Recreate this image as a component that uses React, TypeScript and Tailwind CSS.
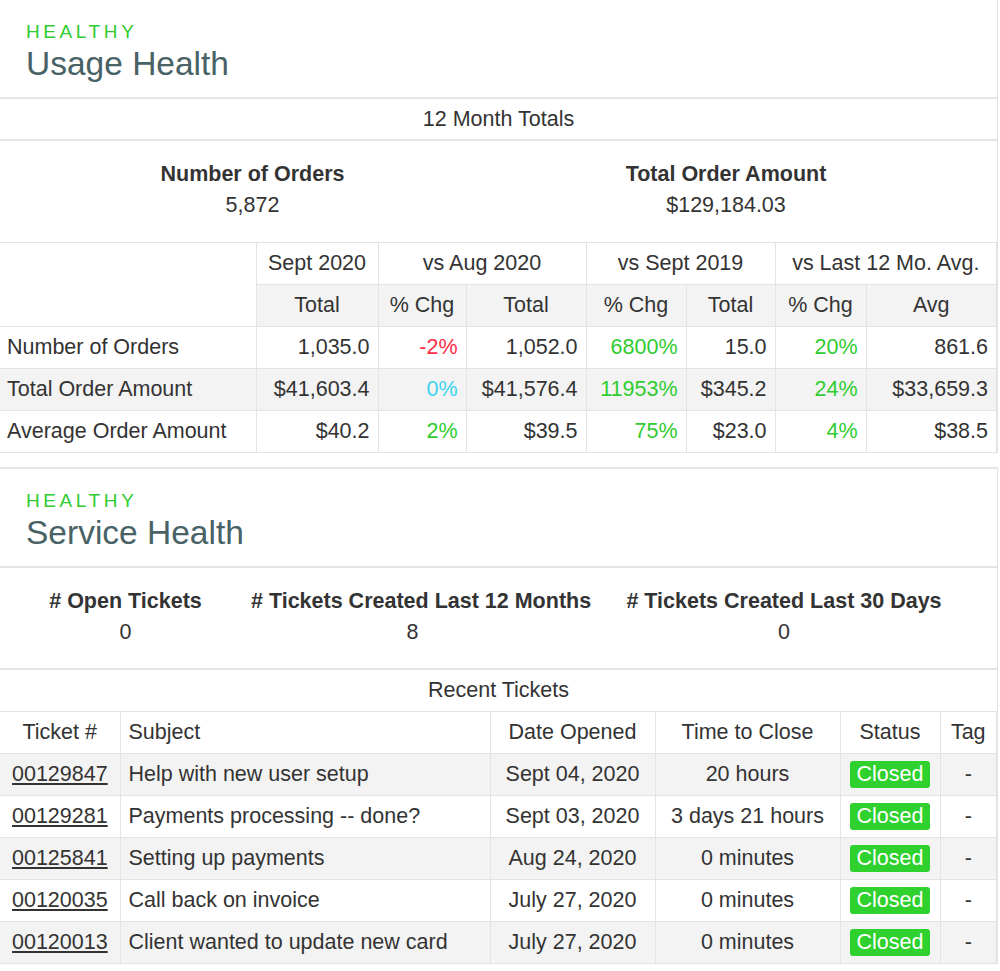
import React from "react";

const G = "text-[#2fcc2f]";
const td = "border border-[#e3e3e3] px-2 h-[42px]";

function Header({ title }: { title: string }) {
  return (
    <div className="px-[26px] pt-[20px] h-[99px] border-b-2 border-[#e5e5e5]">
      <div className={`text-[19px] tracking-[3.6px] leading-[24px] ${G}`}>HEALTHY</div>
      <div className="text-[33.5px] leading-[40px] text-[#486265]">{title}</div>
    </div>
  );
}

const rows = [
  ["Number of Orders", "1,035.0", ["-2%", "text-[#ff2d46]"], "1,052.0", ["6800%", G], "15.0", ["20%", G], "861.6"],
  ["Total Order Amount", "$41,603.4", ["0%", "text-[#3fd3f0]"], "$41,576.4", ["11953%", G], "$345.2", ["24%", G], "$33,659.3"],
  ["Average Order Amount", "$40.2", ["2%", G], "$39.5", ["75%", G], "$23.0", ["4%", G], "$38.5"],
] as const;

const tickets = [
  ["00129847", "Help with new user setup", "Sept 04, 2020", "20 hours"],
  ["00129281", "Payments processing -- done?", "Sept 03, 2020", "3 days 21 hours"],
  ["00125841", "Setting up payments", "Aug 24, 2020", "0 minutes"],
  ["00120035", "Call back on invoice", "July 27, 2020", "0 minutes"],
  ["00120013", "Client wanted to update new card", "July 27, 2020", "0 minutes"],
];

export default function App() {
  return (
    <div className="w-[998px] bg-white text-[#333] text-[21.5px]" style={{ fontFamily: '"Liberation Sans", Arial, sans-serif' }}>
      <div className="border-r border-[#e3e3e3]">
        <Header title="Usage Health" />
        <div className="h-[42px] flex items-center justify-center border-b-2 border-[#e5e5e5]">12 Month Totals</div>
        <div className="h-[101px] flex text-center pt-[20px]">
          <div className="w-[505px]"><div className="font-bold leading-[26px]">Number of Orders</div><div className="leading-[36px]">5,872</div></div>
          <div className="flex-1 pr-[50px]"><div className="font-bold leading-[26px]">Total Order Amount</div><div className="leading-[36px]">$129,184.03</div></div>
        </div>
        <table className="w-full border-collapse table-fixed">
          <colgroup>
            <col className="w-[256px]" /><col className="w-[122px]" /><col className="w-[88px]" /><col className="w-[120px]" />
            <col className="w-[100px]" /><col className="w-[89px]" /><col className="w-[91px]" /><col />
          </colgroup>
          <tbody>
            <tr>
              <td rowSpan={2} className="border border-[#e3e3e3] border-l-0"></td>
              <td className={`${td} text-center`}>Sept 2020</td>
              <td colSpan={2} className={`${td} text-center`}>vs Aug 2020</td>
              <td colSpan={2} className={`${td} text-center`}>vs Sept 2019</td>
              <td colSpan={2} className={`${td} text-center whitespace-nowrap`}>vs Last 12 Mo. Avg.</td>
            </tr>
            <tr className="bg-[#f3f3f3]">
              {["Total", "% Chg", "Total", "% Chg", "Total", "% Chg", "Avg"].map((h, i) => (
                <td key={i} className={`${td} text-center whitespace-nowrap`}>{h}</td>
              ))}
            </tr>
            {rows.map((r, ri) => (
              <tr key={ri} className={ri === 1 ? "bg-[#f3f3f3]" : ""}>
                {r.map((c, i) =>
                  i === 0 ? (
                    <td key={i} className={`${td} border-l-0 px-[7px] text-left whitespace-nowrap`}>{c as string}</td>
                  ) : typeof c === "string" ? (
                    <td key={i} className={`${td} text-right whitespace-nowrap`}>{c}</td>
                  ) : (
                    <td key={i} className={`${td} text-right ${c[1]}`}>{c[0]}</td>
                  )
                )}
              </tr>
            ))}
          </tbody>
        </table>
      </div>
      <div className="h-[16px] border-b-2 border-[#e5e5e5]"></div>
      <div className="border-r border-[#e3e3e3]">
        <Header title="Service Health" />
        <div className="h-[100px] flex text-center pt-[20px]">
          <div className="w-[251px]"><div className="font-bold leading-[26px]"># Open Tickets</div><div className="leading-[36px]">0</div></div>
          <div className="w-[323px]"><div className="font-bold leading-[26px] whitespace-nowrap"># Tickets Created Last 12 Months</div><div className="leading-[36px]">8</div></div>
          <div className="w-[420px]"><div className="font-bold leading-[26px] whitespace-nowrap"># Tickets Created Last 30 Days</div><div className="leading-[36px]">0</div></div>
        </div>
        <div className="h-[43px] flex items-center justify-center border-t-2 border-[#e5e5e5]">Recent Tickets</div>
        <table className="w-full border-collapse table-fixed">
          <colgroup>
            <col className="w-[120px]" /><col className="w-[370px]" /><col className="w-[165px]" /><col className="w-[185px]" /><col className="w-[100px]" /><col />
          </colgroup>
          <tbody>
            <tr>
              <td className={`${td} border-l-0 text-center`}>Ticket #</td>
              <td className={`${td} text-left`}>Subject</td>
              <td className={`${td} text-center`}>Date Opened</td>
              <td className={`${td} text-center`}>Time to Close</td>
              <td className={`${td} text-center`}>Status</td>
              <td className={`${td} text-center`}>Tag</td>
            </tr>
            {tickets.map((t, i) => (
              <tr key={i} className={i % 2 === 0 ? "bg-[#f3f3f3]" : ""}>
                <td className={`${td} border-l-0 px-[12px] underline whitespace-nowrap`}>{t[0]}</td>
                <td className={`${td} whitespace-nowrap`}>{t[1]}</td>
                <td className={`${td} text-center whitespace-nowrap`}>{t[2]}</td>
                <td className={`${td} text-center whitespace-nowrap`}>{t[3]}</td>
                <td className={`${td} text-center`}>
                  <span className="inline-block bg-[#2fd12f] text-white rounded-[3px] px-[7px] leading-[27px]">Closed</span>
                </td>
                <td className={`${td} text-center`}>-</td>
              </tr>
            ))}
          </tbody>
        </table>
      </div>
    </div>
  );
}
